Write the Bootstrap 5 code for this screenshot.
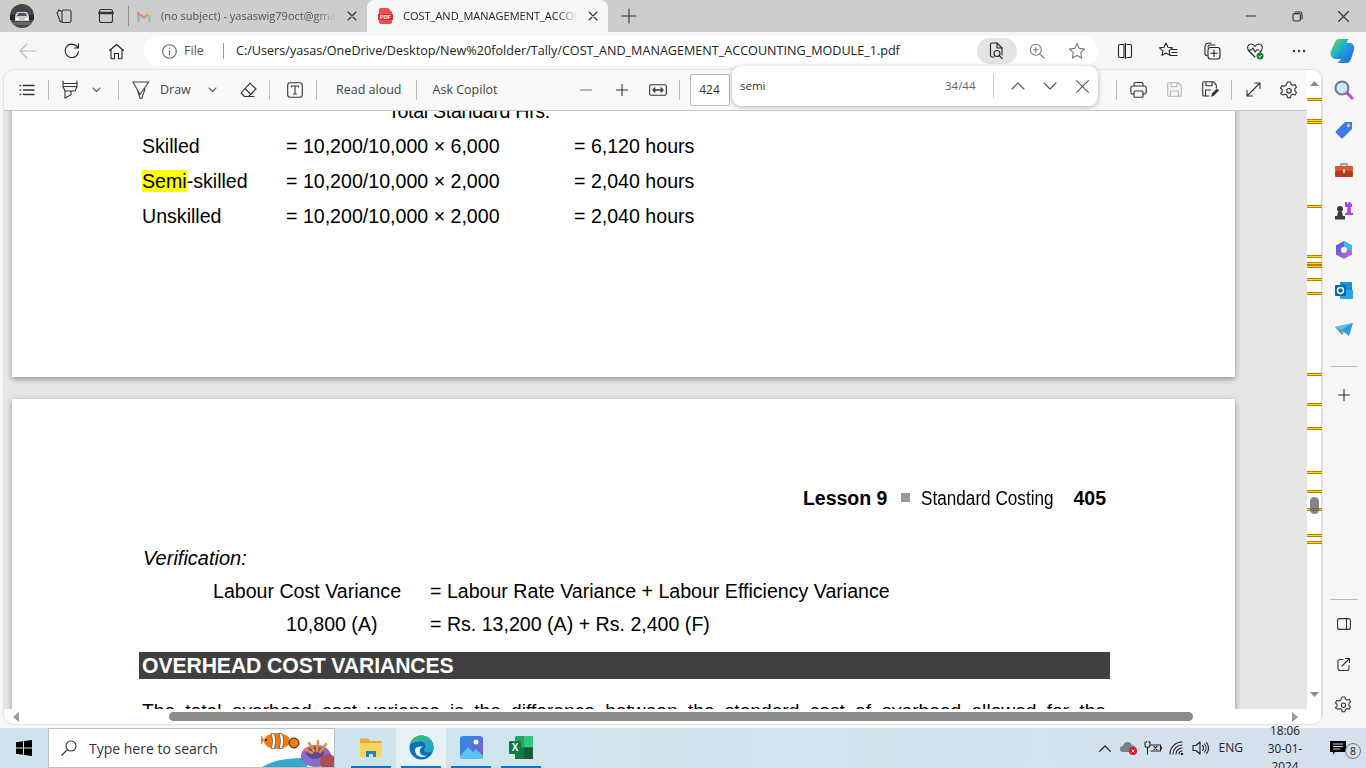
<!DOCTYPE html>
<html lang="en">
<head>
<meta charset="UTF-8">
<meta name="viewport" content="width=device-width, initial-scale=1.0">
<title>COST_AND_MANAGEMENT_ACCOUNTING_MODULE_1.pdf</title>
<link href="https://cdn.jsdelivr.net/npm/bootstrap@5.3.0/dist/css/bootstrap.min.css" rel="stylesheet">
<style>
html, body { height: 768px; overflow: hidden; }
body { font-family: "Open Sans", "Noto Sans", sans-serif; background: #f7f7f7; color: #222; }
svg { display: block; flex: none; }
.shell { width: 1366px; height: 768px; }
.lnx { fill: none; stroke: currentColor; stroke-width: 1.1; stroke-linecap: round; stroke-linejoin: round; }

/* tab strip */
.tabstrip { height: 32px; background: #cdcdcd; font-size: 11px; color: #333; }
.strip-ico { width: 42px; height: 32px; }
.strip-first { width: 43px; }
.strip-sep { width: 1px; height: 20px; background: #8f8f8f; margin: 0 3px 0 1px; }
.tab-idle { width: 235px; height: 32px; padding-left: 5px; }
.tab-live { width: 241px; height: 32px; background: #f7f7f7; border-radius: 8px 8px 0 0; padding-left: 11px; }
.tab-text { overflow: hidden; white-space: nowrap; flex: 1; -webkit-mask-image: linear-gradient(90deg, #000 88%, transparent); mask-image: linear-gradient(90deg, #000 88%, transparent); }
.tab-idle .tab-text { margin-left: 10px; color: #555; }
.tab-live .tab-text { margin-left: 10px; color: #222; }
.tab-x { width: 30px; height: 32px; }
.win-btn { width: 46px; height: 32px; }

/* address row */
.addr-row { height: 38px; padding-top: 4px; }
.nav-ico { width: 44px; height: 30px; }
.nav-back { margin-left: 6px; color: #b9b9b9; }
.addr-pill { width: 954px; height: 30px; background: #fff; border-radius: 15px; margin-left: 6px; font-size: 12.6px; padding-left: 18px; }
.addr-file { color: #555; margin-left: 7px; width: 34px; }
.addr-sep { width: 1px; height: 16px; background: #999; margin: 0 12px 0 5px; }
.addr-url { width: 708px; white-space: nowrap; color: #222; }
.addr-read { width: 40px; height: 26px; background: #e4e4e4; border-radius: 13px; margin-left: 33px; }
.addr-small { width: 40px; height: 26px; }
.bar-ico { width: 43.5px; height: 30px; }
.bar-first { margin-left: 5px; }

/* pdf frame */
.pdf-frame { height: 654px; width: 1318px; margin-left: 4px; background: #fff; border-radius: 10px; box-shadow: 0 0 2px rgba(0,0,0,.28); overflow: hidden; }
.pdf-main { width: 1303px; }
.pdf-tools { height: 41px; background: #f9f9f9; border-bottom: 1px solid #c8c8c8; font-size: 12.5px; color: #444; padding-left: 5px; }
.tool-ico { width: 36px; height: 36px; color: #333; }
.tool-chev { width: 16px; height: 36px; color: #666; }
.tool-sep { width: 1px; height: 20px; background: #bdbdbd; margin: 0 3px; }
.tool-sep-a { margin: 0 13px 0 14px; }
.tool-draw-label { margin: 0 12px 0 10px; width: 32px; }
.tool-erase { margin-left: 10px; }
.tool-label { margin: 0 14px 0 16px; white-space: nowrap; }
.tool-zoom { margin-left: 56px; }
.page-box { width: 40px; height: 32px; border: 1px solid #bbb; border-radius: 2px; background: #fff; margin-left: 7px; font-size: 12px; color: #333; }
.tool-right { margin-left: auto; }
.tool-muted { color: #b5b5b5; }

/* pages */
.viewer { height: 599px; background: #e6e6e6; overflow: hidden; }
.sheet { width: 1223px; margin-left: 8px; background: #fff; box-shadow: 0 2px 6px rgba(0,0,0,.38); font-family: "Liberation Sans", Arial, sans-serif; color: #000; padding-left: 130px; font-size: 19.6px; }
.sheet-one { height: 283px; margin-top: -17px; margin-bottom: 22px; }
.sheet-two { height: 700px; padding-top: 87px; }
.calc-line { height: 35px; line-height: 35px; white-space: nowrap; }
.calc-total { padding-left: 246px; letter-spacing: -.3px; }
.cell-a { width: 144px; }
.cell-b { width: 288px; }
.hit { background: #ff0; }
.run-head { height: 24px; line-height: 24px; width: 964px; font-size: 19.5px; }
.run-head b { font-weight: 700; }
.run-sq { width: 9px; height: 9px; background: #999; margin: 0 11px 0 14px; }
.run-title { display: inline-block; font-size: 19.5px; transform: scaleX(.88); transform-origin: left center; width: 144px; white-space: nowrap; }
.verify { margin-top: 36px; height: 24px; line-height: 24px; font-style: italic; padding-left: 1px; font-size: 20px; }
.var-line { height: 33px; line-height: 33px; white-space: nowrap; }
.var-a { margin-top: 5px; padding-left: 71px; }
.var-b { padding-left: 144px; }
.var-cell-a { width: 217px; }
.var-cell-b { width: 144px; }
.band { width: 971px; height: 27px; line-height: 28px; margin: 11px 0 20px -3px; padding-left: 3px; background: #404040; color: #fff; font-weight: 700; font-size: 21.2px; letter-spacing: -.1px; white-space: nowrap; }
.para { width: 964px; line-height: 24px; text-align: justify; text-align-last: justify; font-size: 19.2px; }

/* scrollbars */
.hscroll { height: 15px; padding: 0 6px 0 0; background: #fff; }
.hs-arrow-l { width: 0; height: 0; border: 5px solid transparent; border-right: 6px solid #999; margin-left: 0; border-left: 0; margin: 0 0 0 9px; }
.hs-thumb { width: 1024px; height: 9px; border-radius: 5px; background: #8c8c8c; margin-left: 150px; }
.hs-arrow-r { width: 0; height: 0; border: 5px solid transparent; border-left: 6px solid #999; border-right: 0; margin-left: 99px; }
.vscroll { width: 15px; height: 654px; background: #fff; border-right: 1px solid #ddd; }
.side { width: 43px; height: 654px; font-size: 0; color: #333; }
.side-ico { height: 40px; }
.side-rule { width: 28px; height: 1px; background: #bbb; }

/* find box, floats over the toolbar */
.find-box { position: absolute; left: 732px; top: 66px; width: 366px; height: 40px; background: #fff; border-radius: 9px; box-shadow: 0 1px 5px rgba(0,0,0,.3); font-size: 11.5px; padding-left: 8px; color: #333; z-index: 5; }
.find-count { margin-left: auto; color: #666; font-size: 11.5px; width: 48px; }
.find-sep { width: 1px; height: 24px; background: #c8c8c8; margin-right: 8px; }
.find-btn { width: 32px; height: 32px; color: #555; }

/* taskbar */
.tray-row { height: 40px; margin-top: 4px; background: linear-gradient(90deg, #cde4ec 0, #cfe4ec 40%, #d5e0ec 100%); font-size: 12px; color: #222; }
.start-btn { width: 48px; height: 40px; }
.search-box { width: 287px; height: 40px; background: #fff; border: 1px solid #b5c2c8; border-bottom-width: 1px; font-size: 14px; color: #333; overflow: hidden; position: relative; padding-left: 12px; }
.search-box span { margin-left: 12px; white-space: nowrap; }
.search-art { position: absolute; right: 0; top: 0; }
.task-app { width: 50px; height: 40px; border-bottom: 2px solid transparent; position: relative; }
.task-on::after { content: ""; position: absolute; left: 5px; right: 5px; bottom: -2px; height: 2px; background: #0078d4; }
.task-live { background: #e6f1f5; }
.task-apps { margin-left: 3px; }
.tray-icons { margin-left: auto; }
.tray-ico { width: 24px; height: 40px; }
.tray-eng { margin: 0 12px 0 6px; }
.tray-clock { width: 60px; line-height: 18px; text-align: center; font-size: 11.8px; margin-right: 15px; }
.tray-note { width: 36px; height: 40px; position: relative; }
.note-num { position: absolute; left: 15px; top: 15px; width: 16px; height: 16px; border: 1px solid #777; border-radius: 50%; background: #d5dfea; font-size: 10.5px; line-height: 14px; text-align: center; }
</style>
</head>
<body>
<div class="shell d-flex flex-column">

  <!-- tabs -->
  <div class="tabstrip d-flex align-items-center">
    <div class="strip-ico d-flex align-items-center justify-content-center strip-first">
      <svg width="24" height="24" viewBox="0 0 24 24"><circle cx="12" cy="12" r="12" fill="#4a4547"/><path d="M0 11h24v5H0z" fill="#2a2a2c"/><path d="M5 12l2-4h10l2 4v5H5z" fill="#c9ccd0"/><path d="M7 12l1.5-3h7l1.5 3z" fill="#53585e"/><path d="M6 14h3v2H6zM15 14h3v2h-3z" fill="#fff"/><path d="M3 18h18v3H3z" fill="#6c6466"/></svg>
    </div>
    <div class="strip-ico d-flex align-items-center justify-content-center">
      <svg class="lnx" width="18" height="18" viewBox="0 0 18 18"><rect x="7" y="3" width="9" height="12.5" rx="1.5" transform="rotate(0)"/><path d="M7 4.5L4.6 3.2 2 5.6l3 8.6 2 1M5.4 3.6L3 3"/></svg>
    </div>
    <div class="strip-ico d-flex align-items-center justify-content-center">
      <svg class="lnx" width="16" height="16" viewBox="0 0 16 16"><rect x="1.5" y="1.5" width="13" height="13" rx="2"/><path d="M1.5 5h13" stroke-width="2.6"/></svg>
    </div>
    <div class="strip-sep"></div>
    <div class="tab-idle d-flex align-items-center">
      <svg width="14" height="12" viewBox="0 0 14 12"><path d="M0 2v9a1 1 0 0 0 1 1h2V5z" fill="#9fb5d8"/><path d="M14 2v9a1 1 0 0 1-1 1h-2V5z" fill="#9fc7a5"/><path d="M0 1.5l3 1.5 4 3 4-3 3-1.5V4l-7 5-7-5z" fill="#de8d85"/><path d="M11 3l2-1.6c.5 0 1 .4 1 1V4l-3 2z" fill="#e9cf85"/></svg>
      <div class="tab-text">(no subject) - yasaswig79oct@gmail.com</div>
      <div class="tab-x d-flex align-items-center justify-content-center"><svg class="lnx" width="10" height="10" viewBox="0 0 10 10"><path d="M1 1l8 8M9 1L1 9"/></svg></div>
    </div>
    <div class="tab-live d-flex align-items-center">
      <svg width="15" height="16" viewBox="0 0 15 16"><path d="M2 0h8l4 4v10a2 2 0 0 1-2 2H3a2 2 0 0 1-2-2V1z" fill="#f14c4c"/><rect x="0" y="6" width="15" height="6" fill="#e62b2b"/><text x="7.5" y="11" font-size="5.4" font-family="Liberation Sans" font-weight="700" fill="#fff" text-anchor="middle">PDF</text></svg>
      <div class="tab-text">COST_AND_MANAGEMENT_ACCOUNTING_MODULE_1.pdf</div>
      <div class="tab-x d-flex align-items-center justify-content-center"><svg class="lnx" width="10" height="10" viewBox="0 0 10 10"><path d="M1 1l8 8M9 1L1 9"/></svg></div>
    </div>
    <div class="strip-ico d-flex align-items-center justify-content-center ms-0">
      <svg class="lnx" width="16" height="16" viewBox="0 0 16 16"><path d="M8 1v14M1 8h14"/></svg>
    </div>
    <div class="ms-auto d-flex">
      <div class="win-btn d-flex align-items-center justify-content-center"><svg class="lnx" width="10" height="10" viewBox="0 0 10 10"><path d="M0 5h10"/></svg></div>
      <div class="win-btn d-flex align-items-center justify-content-center"><svg class="lnx" width="11" height="11" viewBox="0 0 11 11"><rect x="1" y="2.6" width="7.4" height="7.4" rx="1.5"/><path d="M3 1h5.4A1.7 1.7 0 0 1 10 2.7V8"/></svg></div>
      <div class="win-btn d-flex align-items-center justify-content-center"><svg class="lnx" width="11" height="11" viewBox="0 0 11 11"><path d="M.5.5l10 10M10.500.5l-10 10"/></svg></div>
    </div>
  </div>

  <!-- address bar -->
  <div class="addr-row d-flex align-items-start">
    <div class="nav-ico nav-back d-flex align-items-center justify-content-center"><svg class="lnx" width="18" height="16" viewBox="0 0 18 16"><path d="M17 8H1M8 1L1 8l7 7"/></svg></div>
    <div class="nav-ico d-flex align-items-center justify-content-center"><svg class="lnx" width="18" height="18" viewBox="0 0 18 18" stroke-width="1.3"><path d="M15.500 9.500A6.700 6.700 0 1 1 13.500 4l2 2M15.500 1.800V6h-4.200"/></svg></div>
    <div class="nav-ico d-flex align-items-center justify-content-center" style="width:44px"><svg class="lnx" width="17" height="17" viewBox="0 0 17 17"><path d="M1.500 7.500L8.500 1.500l7 6M3 6.500V15a.8.8 0 0 0 .8.8H6.500V10.500h4v5.300h2.700A.8.800 0 0 0 14 15V6.500"/></svg></div>
    <div class="addr-pill d-flex align-items-center">
      <svg class="lnx" width="15" height="15" viewBox="0 0 15 15" color="#666"><circle cx="7.500" cy="7.500" r="6.800"/><path d="M7.500 6.500v4.500M7.500 4v.4"/></svg>
      <div class="addr-file">File</div>
      <div class="addr-sep"></div>
      <div class="addr-url">C:/Users/yasas/OneDrive/Desktop/New%20folder/Tally/COST_AND_MANAGEMENT_ACCOUNTING_MODULE_1.pdf</div>
      <div class="addr-read d-flex align-items-center justify-content-center"><svg class="lnx" width="16" height="18" viewBox="0 0 16 18"><path d="M5 15H3a1.500 1.500 0 0 1-1.500-1.500v-11A1.500 1.500 0 0 1 3 1h5l5 5v7"/><path d="M8 1v5h5"/><circle cx="8" cy="11.500" r="3"/><path d="M10.200 13.700l3 3"/></svg></div>
      <div class="addr-small d-flex align-items-center justify-content-center" color="#666"><svg class="lnx" width="16" height="16" viewBox="0 0 16 16" color="#777"><circle cx="6.800" cy="6.800" r="5.500"/><path d="M10.800 10.800L15 15M6.800 4.500v4.600M4.500 6.800h4.600"/></svg></div>
      <div class="addr-small d-flex align-items-center justify-content-center"><svg class="lnx" width="18" height="18" viewBox="0 0 18 18" color="#777"><path d="M9 1.500l2.300 4.900 5.200.7-3.800 3.600 1 5.300L9 13.400 4.300 16l1-5.300L1.500 7.100l5.200-.7z"/></svg></div>
    </div>
    <div class="bar-ico bar-first d-flex align-items-center justify-content-center"><svg class="lnx" width="16" height="16" viewBox="0 0 16 16"><path d="M7 1.500H3A1.500 1.500 0 0 0 1.500 3v10A1.500 1.500 0 0 0 3 14.500h4zM10 1.500h3A1.500 1.500 0 0 1 14.500 3v10a1.500 1.500 0 0 1-1.500 1.500h-3M8.500 0v16"/></svg></div>
    <div class="bar-ico d-flex align-items-center justify-content-center"><svg class="lnx" width="19" height="18" viewBox="0 0 19 18"><path d="M7 1l1.900 4.300 4.600.5-3.500 3 1 4.600L7 11l-4 2.400 1-4.600-3.500-3 4.600-.5zM13 7.500h5M13 10.500h5M12 13.500h6"/></svg></div>
    <div class="bar-ico d-flex align-items-center justify-content-center"><svg class="lnx" width="18" height="18" viewBox="0 0 18 18"><path d="M4 13.500A2 2 0 0 1 2 12V4l1.600-2.500L8 1M5 5a2 2 0 0 1 2-2h5"/><rect x="5" y="5.500" width="12" height="11.500" rx="2.500"/><path d="M11 8v6.500M7.800 11.200h6.400"/></svg></div>
    <div class="bar-ico d-flex align-items-center justify-content-center">
      <svg width="18" height="18" viewBox="0 0 18 18"><path class="lnx" d="M9 15L2.500 8.500C.5 6 2 2 5 2c1.800 0 3 1 4 2.500C10 3 11.200 2 13 2c3 0 4.500 4 2.500 6.500L14 10M2 8h3.500l1.500-2 2 4 1.500-2H13"/><circle cx="14" cy="14" r="3.500" fill="#107c41"/><path d="M12.400 14l1.200 1.200 2-2.200" stroke="#fff" fill="none"/></svg>
    </div>
    <div class="bar-ico d-flex align-items-center justify-content-center"><svg width="14" height="4" viewBox="0 0 14 4"><circle cx="2" cy="2" r="1.200" fill="#333"/><circle cx="7" cy="2" r="1.200" fill="#333"/><circle cx="12" cy="2" r="1.200" fill="#333"/></svg></div>
    <div class="bar-ico d-flex align-items-center justify-content-center">
      <svg width="25" height="26" viewBox="0 0 25 26"><defs><linearGradient id="cpA" x1="0" y1="0" x2="1" y2="1"><stop offset="0" stop-color="#22c7e8"/><stop offset="1" stop-color="#1f5fd6"/></linearGradient><linearGradient id="cpB" x1="0" y1="0" x2="1" y2="1"><stop offset="0" stop-color="#7fd34c"/><stop offset=".5" stop-color="#19b7c9"/><stop offset="1" stop-color="#1d4fd0"/></linearGradient></defs><path d="M9 1h10c-1.500 1-2 2.500-2.600 5l-2.500 10c-.8 3-2.500 5-5 5H6C1.500 21-.5 17 1 13l3.500-8C5.500 2.500 7 1 9 1z" fill="url(#cpB)"/><path d="M16 5h4c3 0 5 3.500 4 7l-3 9c-1 3-3 4-5 4H7c2 -1 3.500 -3 4 -5l3-10c.4-2 1-4 2-5z" fill="url(#cpA)"/></svg>
    </div>
  </div>

  <div class="d-flex">
    <!-- pdf viewer -->
    <div class="pdf-frame d-flex">
      <div class="pdf-main d-flex flex-column">
        <div class="pdf-tools d-flex align-items-center">
          <div class="tool-ico d-flex align-items-center justify-content-center"><svg class="lnx" width="16" height="12" viewBox="0 0 16 12"><path d="M4.500 1.500H15M4.500 6H15M4.500 10.500H15M1 1.500h.6M1 6h.6M1 10.500h.6" stroke-width="1.400"/></svg></div>
          <div class="tool-sep"></div>
          <div class="tool-ico d-flex align-items-center justify-content-center"><svg class="lnx" width="16" height="19" viewBox="0 0 16 19"><path d="M1 1v5.500h14V1M1 6.500L3 11h10l2-4.500M3 11v7l6-3.200V11M1 3.500h14"/></svg></div>
          <div class="tool-chev d-flex align-items-center justify-content-center"><svg class="lnx" width="9" height="6" viewBox="0 0 9 6"><path d="M1 1l3.500 3.500L8 1"/></svg></div>
          <div class="tool-sep tool-sep-a"></div>
          <div class="tool-draw d-flex align-items-center">
            <svg class="lnx" width="18" height="19" viewBox="0 0 18 19"><path d="M1 2h16M1 2l7 12.500L16.800 2M5 9l3.200 9.500h1.500L13 9"/></svg>
            <div class="tool-draw-label">Draw</div>
          </div>
          <div class="tool-chev d-flex align-items-center justify-content-center"><svg class="lnx" width="9" height="6" viewBox="0 0 9 6"><path d="M1 1l3.500 3.500L8 1"/></svg></div>
          <div class="tool-ico tool-erase d-flex align-items-center justify-content-center"><svg class="lnx" width="17" height="16" viewBox="0 0 17 16"><path d="M10 1.200l6 5.800-7.500 7.500H4.500L1 11zM5 6.500l6 6M4.500 14.500H14"/></svg></div>
          <div class="tool-sep"></div>
          <div class="tool-ico ms-1 d-flex align-items-center justify-content-center"><svg class="lnx" width="16" height="16" viewBox="0 0 16 16"><rect x=".7" y=".7" width="14.600" height="14.600" rx="2.500"/><path d="M4.500 5V4h7v1M8 4v8M6.500 12h3"/></svg></div>
          <div class="tool-sep"></div>
          <div class="tool-label">Read aloud</div>
          <div class="tool-sep m-0"></div>
          <div class="tool-label">Ask Copilot</div>
          <div class="tool-ico tool-zoom d-flex align-items-center justify-content-center"><svg class="lnx" width="12" height="2" viewBox="0 0 12 2" color="#777"><path d="M0 1h12"/></svg></div>
          <div class="tool-ico d-flex align-items-center justify-content-center"><svg class="lnx" width="12" height="12" viewBox="0 0 12 12"><path d="M0 6h12M6 0v12"/></svg></div>
          <div class="tool-ico d-flex align-items-center justify-content-center"><svg class="lnx" width="18" height="12" viewBox="0 0 18 12"><rect x=".7" y=".7" width="16.600" height="10.600" rx="1.500"/><path d="M4 6h10M6 4L4 6l2 2M12 4l2 2-2 2" stroke-width="1.300"/></svg></div>
          <div class="tool-sep"></div>
          <div class="page-box d-flex align-items-center justify-content-center">424</div>
          <div class="tool-right d-flex align-items-center">
            <div class="tool-sep"></div>
            <div class="tool-ico d-flex align-items-center justify-content-center"><svg class="lnx" width="17" height="16" viewBox="0 0 17 16"><path d="M4 4V2a1.500 1.500 0 0 1 1.500-1.500h6A1.500 1.500 0 0 1 13 2v2M4 12H2.500A1.700 1.700 0 0 1 .8 10.300V6A2 2 0 0 1 2.800 4h11.400a2 2 0 0 1 2 2v4.300a1.700 1.700 0 0 1-1.700 1.700H13"/><rect x="4" y="9" width="9" height="6.300" rx="1"/></svg></div>
            <div class="tool-ico tool-muted d-flex align-items-center justify-content-center"><svg class="lnx" width="15" height="15" viewBox="0 0 15 15"><path d="M2 .7h9l3.300 3.300V13a1.300 1.300 0 0 1-1.300 1.300H2A1.300 1.300 0 0 1 .7 13V2A1.300 1.300 0 0 1 2 .7zM4 .7v4h6v-4M3.500 14.300V9h8v5.300"/></svg></div>
            <div class="tool-ico d-flex align-items-center justify-content-center"><svg width="17" height="17" viewBox="0 0 17 17"><path class="lnx" d="M7 15H2A1.300 1.300 0 0 1 .7 13.700V2A1.300 1.300 0 0 1 2 .7h9l3.300 3.300v3M4 .7v4h6v-4M3.500 15V9h5"/><path d="M9 16l1-3.500 5-5 2 2-5 5z" fill="#333"/></svg></div>
            <div class="tool-sep"></div>
            <div class="tool-ico d-flex align-items-center justify-content-center"><svg class="lnx" width="15" height="15" viewBox="0 0 15 15"><path d="M1 14L14 1M8.500 1H14v5.500M1 8.500V14h5.500"/></svg></div>
            <div class="tool-ico d-flex align-items-center justify-content-center"><svg class="lnx" width="18" height="18" viewBox="0 0 18 18"><path d="M7.500 1h3l.5 2.300 1.700 1 2.300-.7 1.500 2.600-1.700 1.600v2l1.700 1.600-1.500 2.600-2.300-.7-1.700 1-.5 2.300h-3l-.5-2.300-1.700-1-2.300.7L.5 12.400l1.700-1.600v-2L.5 7.200 2 4.600l2.300.7 1.700-1z"/><circle cx="9" cy="9.800" r="2.300"/></svg></div>
          </div>
        </div>
        <div class="viewer">
          <div class="sheet sheet-one">
            <div class="calc-line calc-total">Total Standard Hrs.</div>
            <div class="calc-line d-flex"><div class="cell-a">Skilled</div><div class="cell-b">= 10,200/10,000 × 6,000</div><div>= 6,120 hours</div></div>
            <div class="calc-line d-flex"><div class="cell-a"><span class="hit">Semi</span>-skilled</div><div class="cell-b">= 10,200/10,000 × 2,000</div><div>= 2,040 hours</div></div>
            <div class="calc-line d-flex"><div class="cell-a">Unskilled</div><div class="cell-b">= 10,200/10,000 × 2,000</div><div>= 2,040 hours</div></div>
          </div>
          <div class="sheet sheet-two">
            <div class="run-head d-flex align-items-center justify-content-end">
              <b>Lesson 9</b><div class="run-sq"></div><div class="run-title">Standard Costing</div><b class="ms-2">405</b>
            </div>
            <div class="verify">Verification:</div>
            <div class="var-line var-a d-flex"><div class="var-cell-a">Labour Cost Variance</div><div>= Labour Rate Variance + Labour Efficiency Variance</div></div>
            <div class="var-line var-b d-flex"><div class="var-cell-b">10,800 (A)</div><div>= Rs. 13,200 (A) + Rs. 2,400 (F)</div></div>
            <div class="band">OVERHEAD COST VARIANCES</div>
            <div class="para">The total overhead cost variance is the difference between the standard cost of overhead allowed for the</div>
          </div>
        </div>
        <div class="hscroll d-flex align-items-center">
          <div class="hs-arrow-l"></div>
          <div class="hs-thumb"></div>
          <div class="hs-arrow-r"></div>
        </div>
      </div>
      <div class="vscroll">
        <svg id="ticks" width="15" height="654" viewBox="0 0 15 654"><path d="M3 16l4.500-5 4.500 5z" fill="#8a8a8a"/><path d="M3 622l4.500 5 4.500-5z" fill="#8a8a8a"/><rect x="3" y="427" width="9" height="17" rx="4.500" fill="#666" fill-opacity=".8"/></svg>
      </div>
    </div>

    <!-- edge sidebar -->
    <div class="side d-flex flex-column align-items-center">
      <div class="side-ico d-flex align-items-center justify-content-center mt-0">
        <svg width="20" height="20" viewBox="0 0 20 20"><path d="M12 12l6 6" stroke="#c040e0" stroke-width="3" stroke-linecap="round"/><circle cx="8" cy="8" r="6.500" fill="#cfe6f5" stroke="#6b7680" stroke-width="2"/></svg>
      </div>
      <div class="side-ico d-flex align-items-center justify-content-center">
        <svg width="18" height="18" viewBox="0 0 18 18"><path d="M10 1h7v7l-9 9a1.500 1.500 0 0 1-2 0L1 12a1.500 1.500 0 0 1 0-2z" fill="#3f79ee"/><circle cx="13.500" cy="4.500" r="1.700" fill="#f5c842"/></svg>
      </div>
      <div class="side-ico d-flex align-items-center justify-content-center">
        <svg width="18" height="15" viewBox="0 0 18 15"><path d="M6 3V1h6v2" fill="none" stroke="#888" stroke-width="1.300"/><rect y="3" width="18" height="5" rx="1" fill="#d9572b"/><rect y="8" width="18" height="6" rx="1" fill="#b23d1c"/><rect x="8" y="6" width="2" height="4" fill="#ccc"/></svg>
      </div>
      <div class="side-ico d-flex align-items-center justify-content-center">
        <svg width="19" height="19" viewBox="0 0 19 19"><path d="M11 1h2v1.500h1.500V1h2v1.500H18V1v5h-1.500l.5 6h2v2h-8v-2h2l.5-6H11z" fill="#b43de6"/><circle cx="6" cy="8" r="3" fill="#3c3c3c"/><path d="M4 11h4l1 4H3zM1 15h10v3.500H1z" fill="#3c3c3c"/></svg>
      </div>
      <div class="side-ico d-flex align-items-center justify-content-center">
        <svg width="18" height="18" viewBox="0 0 18 18"><defs><linearGradient id="msA" x1="0" y1="0" x2="1" y2="1"><stop offset="0" stop-color="#2f5fd0"/><stop offset=".5" stop-color="#8a5fd8"/><stop offset="1" stop-color="#d36fc8"/></linearGradient></defs><path d="M9 0l8 4.500v9L9 18l-8-4.500v-9z" fill="url(#msA)"/><path d="M9 0l8 4.500v6l-8-4z" fill="#3fb8ee"/><circle cx="9" cy="9" r="3" fill="#f7f7f7"/></svg>
      </div>
      <div class="side-ico d-flex align-items-center justify-content-center">
        <svg width="18" height="17" viewBox="0 0 18 17"><rect x="5" y="0" width="12" height="15" rx="1" fill="#1590dc"/><path d="M5 8h13v8a1 1 0 0 1-1 1H6a1 1 0 0 1-1-1z" fill="#28a8ea"/><rect y="3" width="11" height="11" rx="1" fill="#0a64ad"/><circle cx="5.500" cy="8.500" r="3" fill="none" stroke="#fff" stroke-width="1.500"/></svg>
      </div>
      <div class="side-ico d-flex align-items-center justify-content-center">
        <svg width="18" height="14" viewBox="0 0 18 14"><path d="M0 4l18-4-4 13-5-4-2 3z" fill="#2c9be0"/><path d="M0 4l18-4L6 7z" fill="#5cc0f0"/><path d="M6 7l1 5 2-4z" fill="#e79a28"/></svg>
      </div>
      <div class="side-rule mt-3"></div>
      <div class="side-ico d-flex align-items-center justify-content-center mt-2">
        <svg class="lnx" width="12" height="12" viewBox="0 0 12 12"><path d="M6 0v12M0 6h12"/></svg>
      </div>
      <div class="side-rule mt-auto"></div>
      <div class="side-ico d-flex align-items-center justify-content-center mt-1">
        <svg class="lnx" width="14" height="12" viewBox="0 0 14 12"><rect x=".6" y=".6" width="12.800" height="10.800" rx="2"/><path d="M9.500.6v10.800"/></svg>
      </div>
      <div class="side-ico d-flex align-items-center justify-content-center">
        <svg class="lnx" width="13" height="13" viewBox="0 0 13 13"><path d="M6 1.500H3A2 2 0 0 0 1 3.500v7A2 2 0 0 0 3 12.500h7a2 2 0 0 0 2-2V7.500M5 8l7.500-7.500M8.500.5h4v4"/></svg>
      </div>
      <div class="side-ico d-flex align-items-center justify-content-center">
        <svg class="lnx" width="17" height="17" viewBox="0 0 18 18"><path d="M7.500 1h3l.5 2.300 1.700 1 2.300-.7 1.500 2.600-1.700 1.600v2l1.700 1.600-1.500 2.600-2.300-.7-1.700 1-.5 2.300h-3l-.5-2.300-1.700-1-2.300.7L.5 12.400l1.700-1.600v-2L.5 7.200 2 4.600l2.300.7 1.700-1z"/><circle cx="9" cy="9.800" r="2.300"/></svg>
      </div>
    </div>
  </div>

  <!-- taskbar -->
  <div class="tray-row d-flex align-items-center">
    <div class="start-btn d-flex align-items-center justify-content-center">
      <svg width="16" height="16" viewBox="0 0 16 16"><path d="M0 2.200l7-1V7.500H0zM8 1l8-1v7.500H8zM0 8.500h7v6.300l-7-1zM8 8.500h8V16l-8-1.100z" fill="#000"/></svg>
    </div>
    <div class="search-box d-flex align-items-center">
      <svg class="lnx" width="16" height="16" viewBox="0 0 16 16"><circle cx="10" cy="6" r="5"/><path d="M6.400 9.600L1 15" stroke-width="1.300"/></svg>
      <span>Type here to search</span>
      <svg class="search-art" width="90" height="38" viewBox="0 0 90 38"><path d="M18 38c12-7 25-9 45-9v9z" fill="#3aa7cf"/><ellipse cx="33" cy="12" rx="13" ry="8" fill="#ee7a10"/><path d="M27 4.500c2 5 2 10 0 15h3c2-5 2-10 0-15zM35 4.500c2 5 2 10 0 15h3c2-5 2-10 0-15z" fill="#fff" stroke="#222" stroke-width=".5"/><path d="M20 11l-3-5v10z" fill="#ee7a10"/><circle cx="50" cy="14" r="5" fill="#ee7a10" stroke="#222"/><circle cx="22" cy="11" r="1" fill="#111"/><ellipse cx="72" cy="27" rx="15" ry="11" fill="#8a6cc9"/><ellipse cx="71" cy="24" rx="9" ry="6" fill="#5f4a9a"/><path d="M70 22l-5-8M73 22l1-10M76 23l6-8M68 24l-7-4" stroke="#f08a24" stroke-width="2.500" stroke-linecap="round"/><circle cx="84" cy="33" r="8" fill="#b04b58"/></svg>
    </div>
    <div class="task-apps d-flex">
      <div class="task-app task-on d-flex align-items-center justify-content-center ms-2">
        <svg width="22" height="19" viewBox="0 0 22 19"><path d="M0 2a1.500 1.500 0 0 1 1.500-1.500H8L10 3h10.500A1.500 1.500 0 0 1 22 4.500V8H0z" fill="#e8a92c"/><path d="M0 5h22v12.500a1.500 1.500 0 0 1-1.500 1.500h-19A1.500 1.500 0 0 1 0 17.500z" fill="#fbd45a"/><path d="M6 13h10v6H6z" fill="#2a7cc4"/><path d="M9 16h4v3H9z" fill="#bfe3f5"/></svg>
      </div>
      <div class="task-app task-on task-live d-flex align-items-center justify-content-center">
        <svg width="25" height="25" viewBox="0 0 25 25"><defs><linearGradient id="edA" x1="0" y1="0" x2="1" y2="1"><stop offset="0" stop-color="#36c46e"/><stop offset="1" stop-color="#1b9de2"/></linearGradient></defs><circle cx="12.500" cy="12.500" r="12" fill="#0c6fbd"/><path d="M1 10C3 3 8 .5 12.500.5 20 .5 24.500 6.500 24.500 13c0 3-2.500 4.500-5.500 4.500-2 0-4-1-4-2.500 0-1 1.500-1.500 1.500-3.500 0-3-2-5-5-5C6 6.500 2.500 8 1 10z" fill="url(#edA)"/><path d="M6 15c0 4 3 7 7 7 2 0 4-.5 5-1.500-3 .8-6 0-7-3-.8-2.500.5-5 3-6-4-.5-8 .5-8 3.500z" fill="#e6f1f5"/></svg>
      </div>
      <div class="task-app task-on d-flex align-items-center justify-content-center">
        <svg width="23" height="23" viewBox="0 0 23 23"><defs><linearGradient id="phA" x1="0" y1="0" x2="1" y2="1"><stop offset="0" stop-color="#1f8fe8"/><stop offset="1" stop-color="#8a58c8"/></linearGradient></defs><rect width="23" height="23" rx="3" fill="url(#phA)"/><path d="M0 20l8-9 5 5 3-3 7 7v1a2 2 0 0 1-2 2H2a2 2 0 0 1-2-2z" fill="#58c4f2"/><circle cx="16" cy="6" r="2.500" fill="#f2f8fc"/></svg>
      </div>
      <div class="task-app task-on d-flex align-items-center justify-content-center">
        <svg width="24" height="23" viewBox="0 0 24 23"><rect x="6" y="0" width="18" height="23" rx="1.500" fill="#21a366"/><rect x="15" y="0" width="9" height="11.500" fill="#33c481"/><rect x="6" y="11.500" width="9" height="11.500" fill="#107c41"/><rect x="15" y="11.500" width="9" height="11.500" fill="#185c37"/><rect y="5" width="12" height="13" rx="1" fill="#107c41"/><text x="6" y="15" font-size="10" font-family="Liberation Sans" font-weight="700" fill="#fff" text-anchor="middle">X</text></svg>
      </div>
    </div>
    <div class="tray-icons d-flex align-items-center">
      <div class="tray-ico d-flex align-items-center justify-content-center"><svg class="lnx" width="12" height="7" viewBox="0 0 12 7"><path d="M.6 6.400L6 1l5.400 5.400" stroke-width="1.200"/></svg></div>
      <div class="tray-ico d-flex align-items-center justify-content-center"><svg width="18" height="14" viewBox="0 0 18 14"><path d="M3 11a3 3 0 0 1 0-6c.5-3 3-4.500 5-4 2 0 3.500 1.500 4 3.500a3 3 0 0 1 1 6.500z" fill="#7a8288"/><circle cx="13" cy="10" r="4" fill="#e81123"/><path d="M11.500 8.500l3 3M14.500 8.500l-3 3" stroke="#fff" stroke-width="1"/></svg></div>
      <div class="tray-ico d-flex align-items-center justify-content-center"><svg class="lnx" width="18" height="14" viewBox="0 0 18 14"><path d="M1 1v3a2.500 2.500 0 0 0 5 0V1M3.500 6.500V13M2.500 1V0M5 1V0M7 4h9.500v6H7M17.500 6v2M10 5.500l3 3M13 5.500l-3 3"/></svg></div>
      <div class="tray-ico d-flex align-items-center justify-content-center"><svg class="lnx" width="16" height="14" viewBox="0 0 16 14"><path d="M1 13A12 12 0 0 1 13 1M4 13a9 9 0 0 1 9-9M7 13a6 6 0 0 1 6-6M10 13a3 3 0 0 1 3-3"/><circle cx="13" cy="13" r=".7" fill="#222"/></svg></div>
      <div class="tray-ico d-flex align-items-center justify-content-center"><svg class="lnx" width="17" height="14" viewBox="0 0 17 14"><path d="M1 4.500h3L8 1v12L4 9.500H1zM10.500 4.500a3.500 3.500 0 0 1 0 5M12.500 3a6 6 0 0 1 0 8M14.500 1.500a8.500 8.500 0 0 1 0 11"/></svg></div>
      <div class="tray-eng">ENG</div>
      <div class="tray-clock">18:06<br>30-01-2024</div>
      <div class="tray-note d-flex align-items-center justify-content-start">
        <svg width="16" height="14" viewBox="0 0 16 14"><path d="M0 0h16v11H5l-2 3v-3H0z" fill="#000"/><path d="M3 3h10M3 5.500h10M3 8h7" stroke="#d5dfea" stroke-width="1"/></svg>
        <div class="note-num">8</div>
      </div>
    </div>
  </div>
</div>

<!-- find box -->
<div class="find-box d-flex align-items-center">
  <div>semi</div>
  <div class="find-count">34/44</div>
  <div class="find-sep"></div>
  <div class="find-btn d-flex align-items-center justify-content-center"><svg class="lnx" width="14" height="8" viewBox="0 0 14 8"><path d="M1 7l6-6 6 6"/></svg></div>
  <div class="find-btn d-flex align-items-center justify-content-center"><svg class="lnx" width="14" height="8" viewBox="0 0 14 8"><path d="M1 1l6 6 6-6"/></svg></div>
  <div class="find-btn d-flex align-items-center justify-content-center"><svg class="lnx" width="13" height="13" viewBox="0 0 13 13"><path d="M.6.6l11.800 11.800M12.400.6L.6 12.400"/></svg></div>
</div>

<script>
// find hits on the scrollbar track, y is in page pixels
var hits = [99, 120, 122, 206, 256, 263, 266, 279, 293, 374, 404, 428, 472, 491, 509, 535, 542];
var svg = document.getElementById('ticks');
hits.forEach(function (y) {
  var top = y - 70 - 1;
  [['#c17a00', 0], ['#ffe100', 1], ['#c17a00', 2]].forEach(function (part) {
    var r = document.createElementNS('http://www.w3.org/2000/svg', 'rect');
    r.setAttribute('x', 0);
    r.setAttribute('y', top + part[1]);
    r.setAttribute('width', 15);
    r.setAttribute('height', 1);
    r.setAttribute('fill', part[0]);
    svg.insertBefore(r, svg.lastElementChild);
  });
});
</script>
<script src="https://cdn.jsdelivr.net/npm/bootstrap@5.3.0/dist/js/bootstrap.bundle.min.js"></script>
</body>
</html>
